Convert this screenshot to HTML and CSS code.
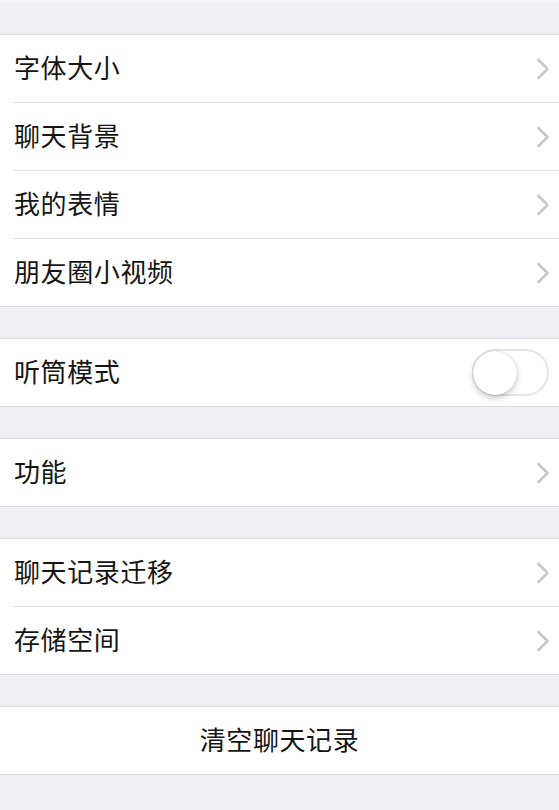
FILE: index.html
```html
<!DOCTYPE html>
<html lang="zh-CN">
<head>
<meta charset="utf-8">
<link rel="stylesheet" href="styles.css">
</head>
<body>
<div class="page">
  <div class="topline"></div>
  <section class="group first">
    <div class="row"><span class="label">字体大小</span><svg class="chev" viewBox="0 0 14 22"><path d="M2.5 2 L11.5 11 L2.5 20"/></svg></div>
    <div class="row"><span class="label">聊天背景</span><svg class="chev" viewBox="0 0 14 22"><path d="M2.5 2 L11.5 11 L2.5 20"/></svg></div>
    <div class="row"><span class="label">我的表情</span><svg class="chev" viewBox="0 0 14 22"><path d="M2.5 2 L11.5 11 L2.5 20"/></svg></div>
    <div class="row"><span class="label">朋友圈小视频</span><svg class="chev" viewBox="0 0 14 22"><path d="M2.5 2 L11.5 11 L2.5 20"/></svg></div>
  </section>
  <section class="group">
    <div class="row"><span class="label">听筒模式</span><span class="toggle"><span class="knob"></span></span></div>
  </section>
  <section class="group">
    <div class="row"><span class="label">功能</span><svg class="chev" viewBox="0 0 14 22"><path d="M2.5 2 L11.5 11 L2.5 20"/></svg></div>
  </section>
  <section class="group">
    <div class="row"><span class="label">聊天记录迁移</span><svg class="chev" viewBox="0 0 14 22"><path d="M2.5 2 L11.5 11 L2.5 20"/></svg></div>
    <div class="row"><span class="label">存储空间</span><svg class="chev" viewBox="0 0 14 22"><path d="M2.5 2 L11.5 11 L2.5 20"/></svg></div>
  </section>
  <section class="group">
    <div class="row center"><span class="label">清空聊天记录</span></div>
  </section>
</div>
</body>
</html>
```
FILE: styles.css
```css
html, body {
  margin: 0;
  padding: 0;
  background: #efeff4;
  height: 100%;
  overflow: hidden;
}
.page {
  font-family: "Noto Sans CJK SC", "Noto Sans", sans-serif;
  color: #151515;
}
.topline {
  height: 2px;
  background: #f6f6f8;
}
.group {
  background: #fff;
  border-top: 1px solid #dcdce0;
  border-bottom: 1px solid #dcdce0;
  margin-top: 31px;
}
.group.first {
  margin-top: 32px;
}
.row {
  height: 67px;
  display: flex;
  align-items: center;
  justify-content: space-between;
  padding: 0 9px 0 14px;
  position: relative;
}
.row + .row {
  border-top: 1px solid #e2e2e5;
  margin-left: 13px;
  padding-left: 1px;
}
.row.center {
  justify-content: center;
  padding: 0;
}
.label {
  font-size: 26px;
  line-height: 1;
  letter-spacing: 0.6px;
  margin-bottom: 4px;
}
.chev {
  width: 14px;
  height: 22px;
  fill: none;
  stroke: #c7c7cc;
  stroke-width: 2.6;
  stroke-linecap: round;
  stroke-linejoin: round;
}
.toggle {
  width: 77px;
  height: 47px;
  box-sizing: border-box;
  border: 2px solid #e5e5ea;
  border-radius: 24px;
  background: #fff;
  display: flex;
  align-items: center;
  margin-right: 1px;
}
.knob {
  width: 44px;
  height: 44px;
  border-radius: 50%;
  background: #fff;
  margin-left: -1px;
  box-shadow: 0 3px 6px rgba(0,0,0,0.22), 0 0 1px rgba(0,0,0,0.25);
}
```
